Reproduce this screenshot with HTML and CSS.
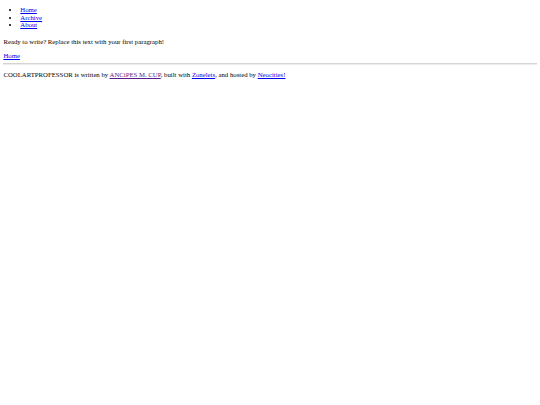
FILE: index.html
```
<!DOCTYPE html>
<html lang="en">
<head>
<meta charset="utf-8">
<title>COOLARTPROFESSOR</title>
<link rel="stylesheet" href="styles.css">
</head>
<body>
<div class="header">
<ul class="nav">
<li><a href="#">Home</a></li>
<li><a href="#">Archive</a></li>
<li><a href="#">About</a></li>
</ul>
</div>
<div class="content">
<p class="para">Ready to write? Replace this text with your first paragraph!</p>
<div class="nextprev"><a href="#">Home</a></div>
</div>
<div class="footer">
<hr class="rule">
<p class="credits">COOLARTPROFESSOR is written by <a class="visited" href="#">ANCiPES M. CUP</a>, built with <a href="#">Zonelets</a>, and hosted by <a href="#">Neocities!</a></p>
</div>
</body>
</html>
```
FILE: styles.css
```
html {
  background: #fff;
}
body {
  margin: 0 3.4px;
  font-family: "Liberation Serif", "Times New Roman", serif;
  font-size: 6.75px;
  line-height: 7.4px;
  color: #000;
}
a {
  color: #0000ee;
  text-decoration: underline;
  text-decoration-thickness: 1px;
}
a.visited {
  color: #551a8b;
}
.nav {
  margin: 6.1px 0 9.4px;
  padding-left: 16.9px;
}
.para {
  margin: 0 0 7.3px;
}
.rule {
  margin: 3.3px 0 0;
  height: 0;
  border: 0;
  border-top: 1px solid #d4d4d4;
  border-bottom: 1px solid #ececec;
}
.credits {
  margin: 6.3px 0 0;
}
```
